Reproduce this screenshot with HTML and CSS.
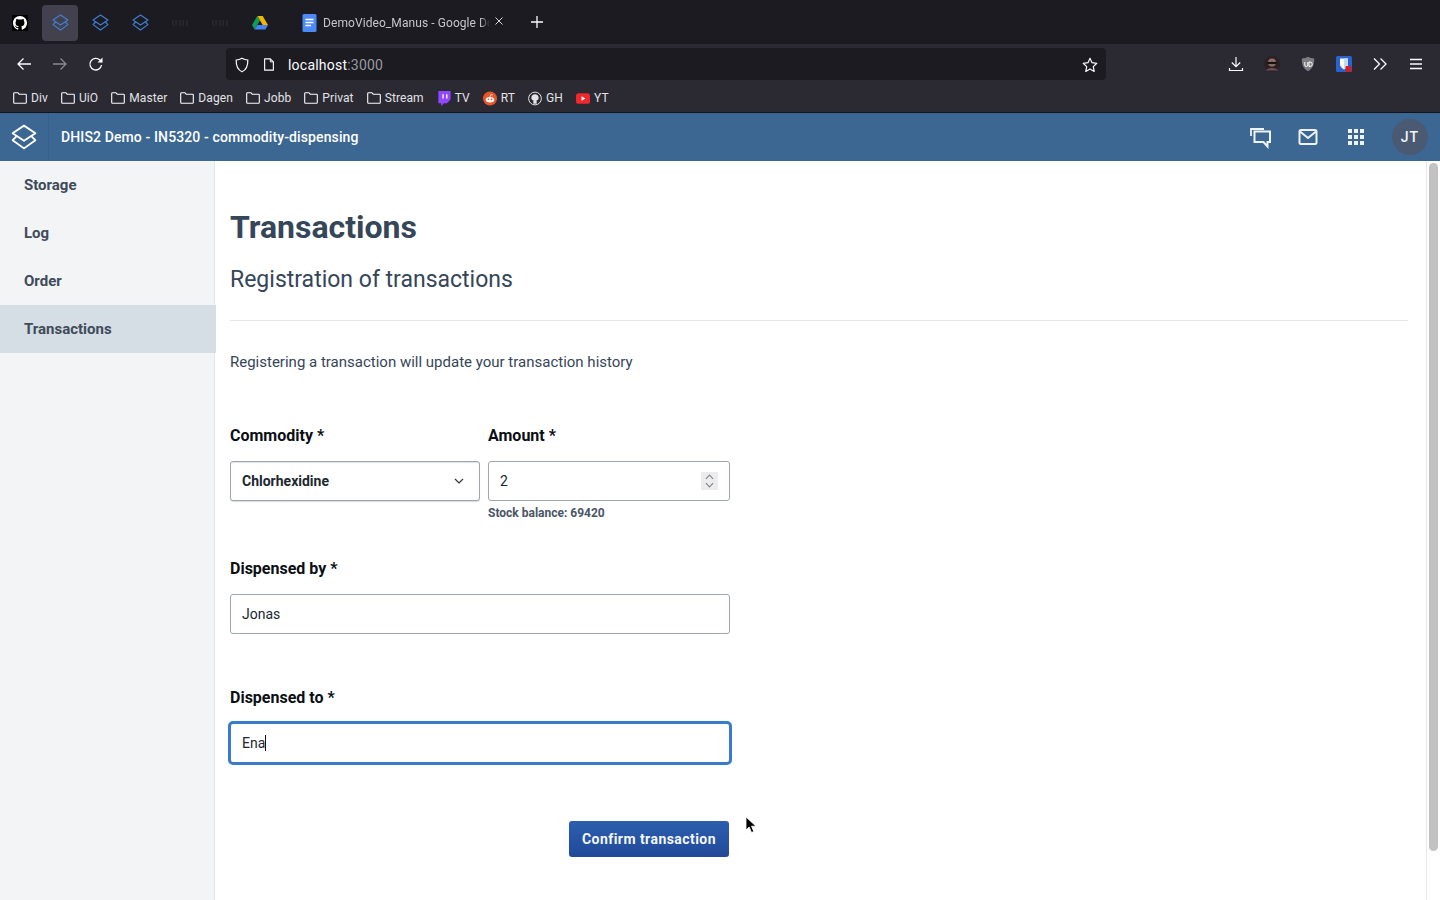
FILE: index.html
```html
<!DOCTYPE html>
<html lang="en">
<head>
  <meta charset="UTF-8">
  <title>DHIS2 Demo - IN5320 - commodity-dispensing</title>
  <link rel="stylesheet" href="styles.css">
</head>
<body>
  <svg class="defs" width="0" height="0">
    <symbol id="layers" viewBox="0 0 24 24">
      <path d="M12 1.500 22.500 8.500 12 15.500 1.500 8.500Z M4.800 11.700 1.500 15 12 22.500 22.500 15 19.200 11.700" fill="none" stroke="currentColor" stroke-width="1.700" stroke-linejoin="round"/>
    </symbol>
    <symbol id="folder" viewBox="0 0 14 12">
      <path d="M1.500.7h3.400l1.300 1.500h6.300a.8.8 0 0 1 .8.8v7.500a.8.8 0 0 1-.8.8H1.500a.8.8 0 0 1-.8-.8V1.500a.8.8 0 0 1 .8-.8Z" fill="none" stroke="currentColor" stroke-width="1.100"/>
    </symbol>
  </svg>

  <!-- browser chrome -->
  <div class="tabbar">
    <div class="pinned"><svg class="gh" viewBox="0 0 16 16"><path fill="#fff" d="M8 0C3.580 0 0 3.580 0 8c0 3.540 2.290 6.530 5.470 7.590.4.070.55-.17.55-.38 0-.19-.01-.82-.01-1.490-2.010.37-2.530-.49-2.690-.94-.09-.23-.48-.94-.82-1.130-.28-.15-.68-.52-.01-.53.63-.01 1.080.58 1.230.82.72 1.210 1.870.87 2.330.66.070-.52.28-.87.51-1.070-1.780-.2-3.640-.89-3.640-3.950 0-.87.31-1.590.82-2.150-.08-.2-.36-1.020.08-2.120 0 0 .67-.21 2.200.82.64-.18 1.320-.27 2-.27.68 0 1.360.09 2 .27 1.530-1.040 2.200-.82 2.200-.82.44 1.100.16 1.920.08 2.120.51.56.82 1.270.82 2.150 0 3.070-1.870 3.750-3.650 3.950.29.25.54.73.54 1.480 0 1.070-.01 1.930-.01 2.200 0 .21.15.46.55.38A8.013 8.013 0 0 0 16 8c0-4.420-3.580-8-8-8z"/></svg></div>
    <div class="pinned active"><svg class="tab-logo"><use href="#layers"/></svg></div>
    <div class="pinned"><svg class="tab-logo"><use href="#layers"/></svg></div>
    <div class="pinned"><svg class="tab-logo"><use href="#layers"/></svg></div>
    <div class="pinned"><svg class="dark-icon" viewBox="0 0 16 6"><path d="M1 0v6M4 0v6M8 0v6M11 0v6M15 0v6" stroke="#2a2a30" stroke-width="1.500"/></svg></div>
    <div class="pinned"><svg class="dark-icon" viewBox="0 0 16 6"><path d="M1 0v6M4 0v6M8 0v6M11 0v6M15 0v6" stroke="#2a2a30" stroke-width="1.500"/></svg></div>
    <div class="pinned">
      <svg class="drive" viewBox="0 0 16 14">
        <path fill="#f4b400" d="M5.300 0h5.400l5.300 9h-5.300z"/>
        <path fill="#0f9d58" d="M5.300 0 0 9l2.500 4.500L8 4.400z"/>
        <path fill="#4285f4" d="M5.400 9H16l-2.600 4.500H2.500z"/>
      </svg>
    </div>
    <div class="tab">
      <svg class="docs" viewBox="0 0 14 18">
        <rect width="14" height="18" rx="1.500" fill="#4c8bf5"/>
        <path d="M3 5.500h8M3 8.500h8M3 11.500h5.500" stroke="#fff" stroke-width="1.300"/>
      </svg>
      <span class="tab-title">DemoVideo_Manus - Google Do</span>
      <svg class="tab-close" viewBox="0 0 10 10"><path d="M1.500 1.500l7 7M8.500 1.500l-7 7" stroke="#d8d8dc" stroke-width="1"/></svg>
    </div>
    <svg class="new-tab" viewBox="0 0 12 12"><path d="M6 0v12M0 6h12" stroke="#fbfbfe" stroke-width="1.300"/></svg>
  </div>

  <div class="toolbar">
    <div class="nav">
      <svg class="tool" viewBox="0 0 16 16"><path d="M15 8H2M7.500 2.500 2 8l5.500 5.500" fill="none" stroke="#fbfbfe" stroke-width="1.300"/></svg>
      <svg class="tool dim" viewBox="0 0 16 16"><path d="M1 8h13M8.500 2.500 14 8l-5.500 5.500" fill="none" stroke="#fbfbfe" stroke-width="1.300"/></svg>
      <svg class="tool" viewBox="0 0 16 16"><path d="M13.500 9a5.800 5.800 0 1 1-1.700-5L14 6" fill="none" stroke="#fbfbfe" stroke-width="1.300"/><path d="M14.500 1.500v5h-5z" fill="#fbfbfe"/></svg>
    </div>
    <div class="urlbar">
      <svg class="url-icon" viewBox="0 0 16 16"><path d="M8 1.200c2 1.200 3.800 1.700 5.800 1.800.2 5.500-1.500 9.800-5.800 11.800C3.700 12.800 2 8.500 2.200 3 4.200 2.900 6 2.400 8 1.200Z" fill="none" stroke="#fbfbfe" stroke-width="1.200"/></svg>
      <svg class="url-icon page" viewBox="0 0 16 16"><path d="M3 1.500h6.500L13 5v9.500H3Z" fill="none" stroke="#fbfbfe" stroke-width="1.300" stroke-linejoin="round"/><path d="M9.500 1.500V5H13" fill="none" stroke="#fbfbfe" stroke-width="1.100"/></svg>
      <span class="host">localhost</span><span class="port">:3000</span>
      <svg class="star" viewBox="0 0 16 16"><path d="m8 1.300 2 4.400 4.800.6-3.500 3.300.9 4.800L8 12l-4.200 2.400.9-4.800L1.200 6.300 6 5.700Z" fill="none" stroke="#fbfbfe" stroke-width="1.200" stroke-linejoin="round"/></svg>
    </div>
    <div class="extensions">
      <svg class="tool" viewBox="0 0 16 16"><path d="M8 1v9.500M3.800 6.500 8 10.700l4.200-4.200M1.500 12v2.500h13V12" fill="none" stroke="#fbfbfe" stroke-width="1.200"/></svg>
      <svg class="tool" viewBox="0 0 16 16"><circle cx="8" cy="8" r="8" fill="#2c2023"/><circle cx="8" cy="6.500" r="4" fill="#8f6f68"/><path d="M3.500 7h9" stroke="#15110f" stroke-width="2.200"/><path d="M2 14.500c1.500-3.500 10.500-3.500 12 0" fill="#6b5450"/></svg>
      <svg class="tool" viewBox="0 0 16 16"><path d="M8 .8c2 1.100 3.800 1.600 6.200 1.700.2 5.800-1.600 10.400-6.200 12.700C3.400 12.900 1.600 8.300 1.800 2.500 4.200 2.400 6 1.900 8 .8Z" fill="#7d7d83"/><path d="M4.800 6v3a1.500 1.500 0 0 0 3 0V6M9 6v4.500h1a2.200 2.200 0 0 0 0-4.500Z" fill="none" stroke="#fff" stroke-width="1"/></svg>
      <svg class="tool" viewBox="0 0 16 16"><rect width="16" height="16" rx="1.500" fill="#2a62cf"/><path d="M4 2.500h8v6c0 2-2 3.800-4 5-2-1.200-4-3-4-5Z" fill="#fff"/><path d="M8 2.500h4v6c0 2-2 3.800-4 5Z" fill="#c9d7f3"/><rect x="9.500" y="10" width="6" height="6" rx="1" fill="#c8222c"/></svg>
      <svg class="tool" viewBox="0 0 16 16"><path d="m2 2.500 5.500 5.500L2 13.500M8.500 2.500 14 8l-5.500 5.500" fill="none" stroke="#fbfbfe" stroke-width="1.300"/></svg>
      <svg class="tool" viewBox="0 0 16 16"><path d="M2 3.500h12M2 8h12M2 12.500h12" stroke="#fbfbfe" stroke-width="1.300"/></svg>
    </div>
  </div>

  <div class="bookmarks">
    <div class="bookmark"><svg class="folder"><use href="#folder"/></svg>Div</div>
    <div class="bookmark"><svg class="folder"><use href="#folder"/></svg>UiO</div>
    <div class="bookmark"><svg class="folder"><use href="#folder"/></svg>Master</div>
    <div class="bookmark"><svg class="folder"><use href="#folder"/></svg>Dagen</div>
    <div class="bookmark"><svg class="folder"><use href="#folder"/></svg>Jobb</div>
    <div class="bookmark"><svg class="folder"><use href="#folder"/></svg>Privat</div>
    <div class="bookmark"><svg class="folder"><use href="#folder"/></svg>Stream</div>
    <div class="bookmark">
      <svg class="favicon" viewBox="0 0 14 16"><path d="M1 0h13v9l-4 4H7l-3 3v-3H1Z" fill="#9147ff"/><path d="M6 3.500v4.500M10 3.500v4.500" stroke="#fff" stroke-width="1.400"/></svg>TV
    </div>
    <div class="bookmark">
      <svg class="favicon" viewBox="0 0 16 16"><circle cx="8" cy="8" r="8" fill="#e8562a"/><ellipse cx="8" cy="9.500" rx="4.800" ry="3.200" fill="#fff"/><circle cx="6.200" cy="9" r=".9" fill="#e8562a"/><circle cx="9.800" cy="9" r=".9" fill="#e8562a"/><path d="M8 6.500 9 3.500l2.300.5" fill="none" stroke="#fff" stroke-width=".8"/></svg>RT
    </div>
    <div class="bookmark">
      <svg class="favicon" viewBox="0 0 16 16"><circle cx="8" cy="8" r="7.300" fill="none" stroke="#fbfbfe" stroke-width="1"/><path fill="#e4e4e8" d="M8 3C5.500 3 3.800 4.800 3.800 7c0 2 1.300 3 2.700 3.400-.3.300-.4.600-.4 1.100V14h3.800v-2.500c0-.5-.1-.8-.4-1.100C10.900 10 12.200 9 12.200 7 12.200 4.800 10.500 3 8 3Z"/></svg>GH
    </div>
    <div class="bookmark">
      <svg class="favicon" viewBox="0 0 16 12"><rect width="16" height="12" rx="3" fill="#f0272d"/><path d="m6.300 3.300 4.400 2.700-4.400 2.700Z" fill="#fff"/></svg>YT
    </div>
  </div>

  <!-- dhis2 header bar -->
  <header class="appheader">
    <div class="app-logo"><svg><use href="#layers"/></svg></div>
    <div class="app-title">DHIS2 Demo - IN5320 - commodity-dispensing</div>
    <div class="app-actions">
      <svg class="app-icon" viewBox="0 0 24 24"><path d="M3 11V4h13" fill="none" stroke="currentColor" stroke-width="1.800"/><path d="M6.500 6.500H22V17h-2.500v4.500L15.500 17h-9Z" fill="none" stroke="currentColor" stroke-width="2"/></svg>
      <svg class="app-icon" viewBox="0 0 24 24"><rect x="3.500" y="5" width="17" height="14" rx="1.500" fill="none" stroke="currentColor" stroke-width="2"/><path d="m4 6.500 8 6.500 8-6.500" fill="none" stroke="currentColor" stroke-width="2"/></svg>
      <svg class="app-icon" viewBox="0 0 24 24"><path fill="currentColor" d="M4 4h4v4H4zM10 4h4v4h-4zM16 4h4v4h-4zM4 10h4v4H4zM10 10h4v4h-4zM16 10h4v4h-4zM4 16h4v4H4zM10 16h4v4h-4zM16 16h4v4h-4z"/></svg>
      <div class="avatar">JT</div>
    </div>
  </header>

  <div class="page">
    <nav class="sidebar">
      <div class="nav-item">Storage</div>
      <div class="nav-item">Log</div>
      <div class="nav-item">Order</div>
      <div class="nav-item selected">Transactions</div>
    </nav>

    <main class="content">
      <h1>Transactions</h1>
      <h2>Registration of transactions</h2>
      <hr>
      <p class="intro">Registering a transaction will update your transaction history</p>

      <form class="form">
        <div class="row">
          <div class="field commodity">
            <label>Commodity *</label>
            <div class="box select">
              <span>Chlorhexidine</span>
              <svg class="chevron" viewBox="0 0 10 6"><path d="m1 1 4 4 4-4" fill="none" stroke="#333" stroke-width="1.200"/></svg>
            </div>
          </div>
          <div class="field amount">
            <label>Amount *</label>
            <div class="box">
              <span>2</span>
              <div class="stepper">
                <svg viewBox="0 0 10 5"><path d="m2 4 3-3 3 3" fill="none" stroke="#888" stroke-width="1"/></svg>
                <svg viewBox="0 0 10 5"><path d="m2 1 3 3 3-3" fill="none" stroke="#888" stroke-width="1"/></svg>
              </div>
            </div>
            <div class="help">Stock balance: 69420</div>
          </div>
        </div>

        <div class="field by">
          <label>Dispensed by *</label>
          <div class="box">Jonas</div>
        </div>

        <div class="field to">
          <label>Dispensed to *</label>
          <div class="box focused">Ena<span class="caret"></span></div>
        </div>

        <div class="actions">
          <button type="button" class="primary">Confirm transaction</button>
        </div>
      </form>
    </main>

    <div class="scrollbar"><div class="thumb"></div></div>
  </div>

  <svg class="pointer" viewBox="0 0 12 18"><path d="M1 1v13l3.200-3 2.300 5.500 2.300-1-2.300-5.300H11Z" fill="#000" stroke="#fff" stroke-width=".8"/></svg>
</body>
</html>
```

FILE: styles.css
```css
* {
  box-sizing: border-box;
  margin: 0;
  padding: 0;
}

html, body {
  height: 900px;
  overflow: hidden;
}

body {
  font-family: Roboto, "Liberation Sans", sans-serif;
  background-color: #fff;
  position: relative;
}

.defs {
  position: absolute;
}

/* browser chrome */
.tabbar {
  height: 44px;
  background-color: #1c1b22;
  display: flex;
  align-items: center;
}

.pinned {
  width: 40px;
  height: 36px;
  margin-top: 1px;
  border-radius: 4px;
  display: flex;
  align-items: center;
  justify-content: center;
}

.pinned.active {
  width: 36px;
  margin: 1px 2px 0;
  background-color: #42414d;
}

.gh {
  width: 14px;
  height: 14px;
  outline: 1px solid #000;
  background-color: #000;
}

.tab-logo {
  width: 17px;
  height: 17px;
  color: #3f7fd0;
}

.dark-icon {
  width: 16px;
  height: 6px;
}

.drive {
  width: 16px;
  height: 14px;
}

.tab {
  width: 212px;
  margin-left: 22px;
  padding-top: 1px;
  display: flex;
  align-items: center;
  color: #c6c6ca;
  font-size: 12px;
}

.docs {
  width: 15px;
  height: 18px;
  margin-right: 6px;
  flex-shrink: 0;
}

.tab-title {
  width: 167px;
  white-space: nowrap;
  letter-spacing: .08px;
  -webkit-mask-image: linear-gradient(90deg, #000 94%, transparent);
  mask-image: linear-gradient(90deg, #000 94%, transparent);
}

.tab-close {
  width: 10px;
  height: 10px;
  margin-left: 4px;
  margin-top: -3px;
}

.new-tab {
  width: 12px;
  height: 12px;
  margin-left: 17px;
}

.toolbar {
  height: 40px;
  background-color: #2b2a33;
  display: flex;
  align-items: center;
}

.nav {
  width: 226px;
  display: flex;
  gap: 20px;
  padding-left: 16px;
}

.tool {
  width: 16px;
  height: 16px;
}

.tool.dim {
  opacity: .45;
}

.urlbar {
  width: 880px;
  height: 32px;
  background-color: #1c1b22;
  border-radius: 4px;
  display: flex;
  align-items: center;
  padding: 1px 0 0 8px;
  font-size: 14px;
  letter-spacing: .22px;
}

.url-icon {
  width: 16px;
  height: 16px;
  margin-right: 12px;
}

.url-icon.page {
  margin-right: 12px;
  width: 14px;
}

.host {
  color: #fbfbfe;
}

.port {
  color: #9a9aa0;
}

.star {
  width: 16px;
  height: 16px;
  margin-left: auto;
  margin-right: 8px;
}

.extensions {
  margin-left: 122px;
  display: flex;
  gap: 20px;
}

.bookmarks {
  height: 29px;
  background-color: #2b2a33;
  border-bottom: 1px solid #12161c;
  display: flex;
  align-items: center;
  padding-left: 13px;
  gap: 13px;
  font-size: 12px;
  color: #e2e2e6;
}

.bookmark {
  display: flex;
  align-items: center;
  letter-spacing: .1px;
}

.folder {
  width: 14px;
  height: 12px;
  margin-right: 4px;
  color: #fbfbfe;
}

.favicon {
  width: 14px;
  height: 15px;
  margin-right: 4px;
}

/* header bar */
.appheader {
  height: 48px;
  background-color: #3c6793;
  color: #fff;
  display: flex;
  align-items: center;
}

.app-logo {
  width: 49px;
  height: 48px;
  border-right: 1px solid #36608b;
  display: flex;
  align-items: center;
  justify-content: center;
}

.app-logo svg {
  width: 26px;
  height: 26px;
}

.app-title {
  margin-left: 12px;
  font-size: 14px;
  font-weight: 500;
  letter-spacing: .12px;
}

.app-actions {
  margin-left: auto;
  display: flex;
  align-items: center;
  gap: 24px;
  padding-right: 12px;
  color: #eef3f8;
}

.app-icon {
  width: 24px;
  height: 24px;
}

.avatar {
  width: 36px;
  height: 36px;
  border-radius: 50%;
  background-color: #4a5a72;
  color: #f2f5f8;
  font-size: 14px;
  font-weight: 500;
  letter-spacing: 1px;
  display: flex;
  align-items: center;
  justify-content: center;
}

/* page */
.page {
  display: flex;
  height: 739px;
}

.sidebar {
  width: 215px;
  flex-shrink: 0;
  background-color: #f3f4f6;
  border-right: 1px solid #e4e7eb;
}

.nav-item {
  height: 48px;
  line-height: 48px;
  padding-left: 24px;
  font-size: 15px;
  font-weight: 700;
  color: #404b5a;
}

.nav-item.selected {
  width: 216px;
  background-color: #d5dde5;
}

.content {
  flex: 1;
  padding: 0 18px 0 15px;
}

h1 {
  margin-top: 46px;
  font-size: 32px;
  line-height: 40px;
  font-weight: 700;
  color: #364659;
}

h2 {
  margin-top: 21px;
  font-size: 23px;
  line-height: 24px;
  font-weight: 400;
  color: #364659;
}

hr {
  margin-top: 28px;
  border: 0;
  border-top: 1px solid #e4e7eb;
}

.intro {
  margin-top: 32px;
  font-size: 15px;
  line-height: 18px;
  color: #364659;
}

.form {
  width: 500px;
}

.row {
  display: flex;
  gap: 8px;
  margin-top: 55px;
}

.commodity {
  width: 250px;
}

.amount {
  width: 242px;
}

label {
  display: block;
  font-size: 16px;
  line-height: 20px;
  font-weight: 700;
  color: #0b0f14;
  margin-bottom: 15px;
}

.box {
  height: 40px;
  border: 1px solid #a0a6b0;
  border-radius: 3px;
  background-color: #fff;
  display: flex;
  align-items: center;
  padding-left: 11px;
  font-size: 14px;
  color: #21272f;
}

.select {
  font-weight: 700;
  box-shadow: inset 0 1px 1px rgba(0, 0, 0, .12), 0 1px 1px rgba(0, 0, 0, .15);
}

.chevron {
  width: 10px;
  height: 6px;
  margin-left: auto;
  margin-right: 15px;
}

.stepper {
  width: 17px;
  height: 18px;
  margin-left: auto;
  margin-right: 11px;
  background-color: #ececee;
  display: flex;
  flex-direction: column;
  justify-content: center;
  gap: 2px;
}

.stepper svg {
  width: 17px;
  height: 6px;
}

.help {
  margin-top: 5px;
  font-size: 12px;
  line-height: 14px;
  font-weight: 700;
  color: #4a5568;
}

.by {
  margin-top: 39px;
}

.to {
  margin-top: 54px;
}

.to label {
  margin-bottom: 13px;
}

.box.focused {
  height: 44px;
  margin: 0 -2px;
  border: 3px solid #3a7bcc;
  border-radius: 5px;
  padding-left: 11px;
}

.caret {
  width: 1px;
  height: 16px;
  background-color: #111;
}

.actions {
  display: flex;
  justify-content: flex-end;
  margin-top: 56px;
  padding-right: 1px;
}

.primary {
  width: 160px;
  height: 36px;
  border: 0;
  border-radius: 3px;
  background: linear-gradient(#2b5fae, #22499a);
  color: #f4f7fb;
  font-family: inherit;
  font-size: 14px;
  font-weight: 700;
  letter-spacing: .45px;
}

.scrollbar {
  width: 14px;
  flex-shrink: 0;
  background-color: #fff;
  border-left: 1px solid #e8e8e8;
  padding: 2px 2px 0 2px;
}

.thumb {
  height: 688px;
  border-radius: 5px;
  background-color: #c2c2c2;
}

/* mouse pointer in the recording */
.pointer {
  position: absolute;
  left: 745px;
  top: 816px;
  width: 12px;
  height: 18px;
}
```
